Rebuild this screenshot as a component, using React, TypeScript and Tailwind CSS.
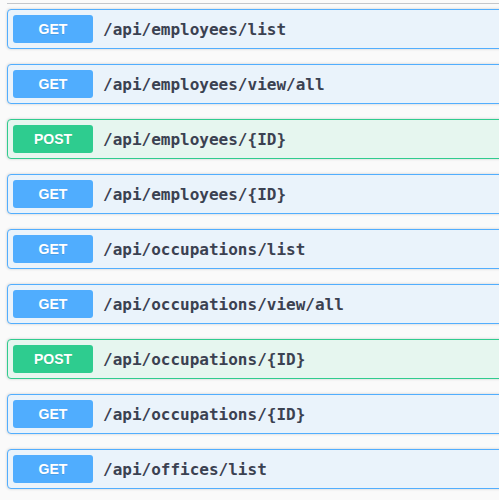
import React from "react";

type Op = { method: "GET" | "POST"; path: string };

const ops: Op[] = [
  { method: "GET", path: "/api/employees/list" },
  { method: "GET", path: "/api/employees/view/all" },
  { method: "POST", path: "/api/employees/{ID}" },
  { method: "GET", path: "/api/employees/{ID}" },
  { method: "GET", path: "/api/occupations/list" },
  { method: "GET", path: "/api/occupations/view/all" },
  { method: "POST", path: "/api/occupations/{ID}" },
  { method: "GET", path: "/api/occupations/{ID}" },
  { method: "GET", path: "/api/offices/list" },
];

function Block({ op }: { op: Op }) {
  const isGet = op.method === "GET";
  return (
    <div
      className={
        isGet
          ? "mb-[15px] w-[540px] rounded-[4px] border border-[#52aefe] bg-[#eaf3fb] shadow-[0_0_3px_rgba(0,0,0,0.19)]"
          : "mb-[15px] w-[540px] rounded-[4px] border border-[#30cc8f] bg-[#e6f6ef] shadow-[0_0_3px_rgba(0,0,0,0.19)]"
      }
    >
      <div className="flex items-center p-[5px]">
        <span
          className={
            isGet
              ? "flex h-[28px] w-[80px] items-center justify-center rounded-[3px] bg-[#50adfe] text-[14px] font-bold leading-none text-white [text-shadow:0_1px_0_rgba(0,0,0,0.1)] font-['Liberation_Sans',Arial,sans-serif]"
              : "flex h-[28px] w-[80px] items-center justify-center rounded-[3px] bg-[#2ecc8f] text-[14px] font-bold leading-none text-white [text-shadow:0_1px_0_rgba(0,0,0,0.1)] font-['Liberation_Sans',Arial,sans-serif]"
          }
        >
          {op.method}
        </span>
        <span className="px-[10px] pt-[1px] text-[16px] font-bold leading-none text-[#3b4151] font-['DejaVu_Sans_Mono','Courier_New',monospace]">
          {op.path}
        </span>
      </div>
    </div>
  );
}

export default function App() {
  return (
    <div className="h-[500px] w-[499px] overflow-hidden bg-[#fafafa] pl-[7px] pt-[3px]">
      <div className="mb-[5px] h-px w-[540px] bg-[#c4c6ca]" />
      {ops.map((op, i) => (
        <Block key={i} op={op} />
      ))}
    </div>
  );
}
